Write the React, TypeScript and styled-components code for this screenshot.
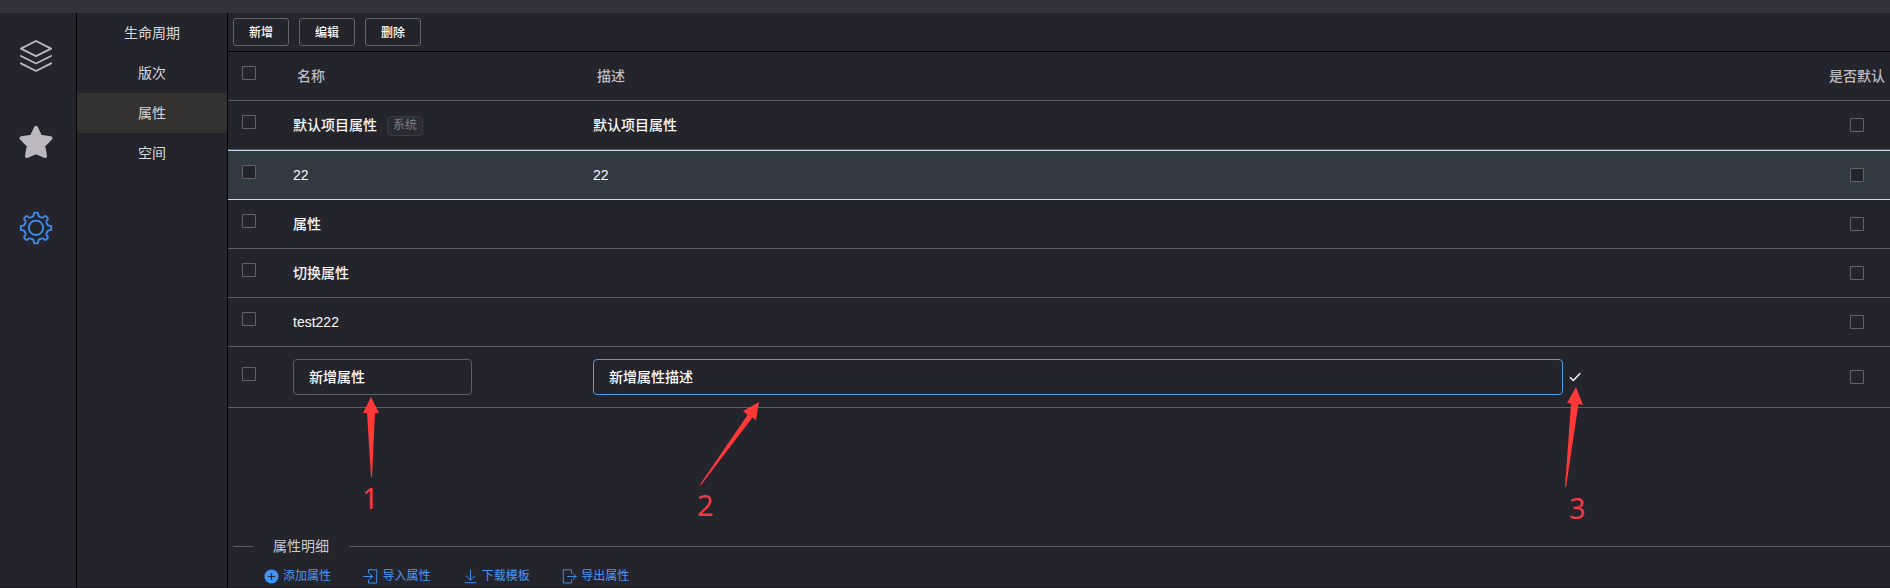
import React from "react";
import styled, { createGlobalStyle, css } from "styled-components";

const Global = createGlobalStyle`
  *, *::before, *::after { box-sizing: border-box; }
  body {
    margin: 0;
    background: #24242d;
    color: #f4f4f6;
    font: 14px/20px "Liberation Sans", "Noto Sans CJK SC", sans-serif;
    overflow: hidden;
  }
  button, input { font-family: inherit; }
`;

const Page = styled.div`
  position: relative;
  display: flex;
  flex-direction: column;
  width: 1890px;
  height: 588px;
  overflow: hidden;
  border-bottom: 1px solid #1b1b23;
`;

const TopBar = styled.header`
  flex: none;
  height: 13px;
  background: #32323d;
`;

const Body = styled.div`
  display: flex;
  flex: 1;
  min-height: 0;
`;

const IconRail = styled.nav`
  display: flex;
  flex-direction: column;
  align-items: center;
  flex: none;
  width: 77px;
  padding: 26px 4px 0 0;
  gap: 52px;
  border-right: 1px solid #000;
`;

const RailIcon = styled.svg<{ $active?: boolean }>`
  display: block;
  flex: none;
  width: 34px;
  height: 34px;
  color: ${(p) => (p.$active ? "#3e8ef2" : "#bbb8be")};
`;

const SideMenu = styled.nav`
  display: flex;
  flex-direction: column;
  flex: none;
  width: 151px;
  border-right: 1px solid #000;
`;

const MenuItem = styled.a<{ $active?: boolean }>`
  display: flex;
  align-items: center;
  justify-content: center;
  height: 40px;
  color: #d9d9db;
  background: ${(p) => (p.$active ? "#343230" : "transparent")};
`;

const Main = styled.main`
  display: flex;
  flex-direction: column;
  flex: 1;
  min-width: 0;
`;

const Toolbar = styled.div`
  display: flex;
  gap: 10px;
  flex: none;
  height: 39px;
  padding: 5px;
  border-bottom: 1px solid #000;
`;

const ToolButton = styled.button`
  width: 56px;
  height: 28px;
  padding: 0 0 2px;
  border: 1px solid #65656e;
  border-radius: 3px;
  background: transparent;
  color: #fff;
  font-size: 12px;
  font-weight: 500;
`;

const Row = styled.div<{ $selected?: boolean; $head?: boolean; $tall?: boolean }>`
  display: grid;
  grid-template-columns: 65px 300px 1fr 67px;
  align-items: center;
  flex: none;
  height: ${(p) => (p.$tall ? 61 : 49)}px;
  border-bottom: 1px solid #5d5d67;
  color: ${(p) => (p.$head ? "#bdbcc2" : "#fafafa")};
  font-weight: 500;
  ${(p) =>
    p.$selected &&
    css`
      height: 50px;
      border-top: 1px solid #c5dbe5;
      border-bottom-color: #c5dbe5;
      background: #313a43;
    `}
`;

const CheckCell = styled.div`
  padding: 0 0 6px 14px;
`;

const Cell = styled.div<{ $indent?: boolean }>`
  display: flex;
  align-items: center;
  padding-left: ${(p) => (p.$indent ? 4 : 0)}px;
`;

const DefaultCell = styled.div`
  display: flex;
  padding-left: 27px;
`;

const DefaultHead = styled.div`
  padding-left: 6px;
  white-space: nowrap;
`;

const Checkbox = styled.span`
  display: block;
  width: 14px;
  height: 14px;
  border: 1px solid #62626b;
  border-radius: 1px;
  background: #24242d;
`;

const Tag = styled.span`
  height: 20px;
  margin: 2px 0 0 10px;
  padding: 0 5px;
  border: 1px solid #3a3a43;
  border-radius: 4px;
  background: #2b2b34;
  color: #7f7f87;
  font-size: 12px;
  font-weight: 400;
  line-height: 17px;
`;

const TextField = styled.input<{ $width: number; $focused?: boolean }>`
  width: ${(p) => p.$width}px;
  height: 36px;
  padding: 0 15px 2px;
  border: 1px solid ${(p) => (p.$focused ? "#4a9fe8" : "#5f5f69")};
  border-radius: 4px;
  outline: none;
  background: transparent;
  color: #fff;
  font-size: 14px;
  font-weight: 500;
`;

const ConfirmIcon = styled.svg`
  width: 14px;
  height: 14px;
  margin-left: 5px;
`;

const Details = styled.section`
  margin-top: auto;
  height: 53px;
`;

const DividerTitle = styled.div`
  display: flex;
  align-items: center;
  height: 24px;
  padding-left: 5px;
  gap: 20px;
  color: #cbcbcf;

  &::before, &::after {
    content: "";
    height: 1px;
    width: 20px;
    background: #5b5b64;
  }
  &::after { flex: 1; }
`;

const Actions = styled.div`
  display: flex;
  padding: 9px 0 0 36px;
`;

const Action = styled.a`
  display: flex;
  width: 99.4px;
  gap: 4px;
  color: #4b98f5;
  font-size: 12px;
  line-height: 18px;

  svg { width: 15px; height: 15px; margin-top: 2px; flex: none; }
`;

const Annotations = styled.svg`
  position: absolute;
  inset: 0;
  width: 1890px;
  height: 588px;
  pointer-events: none;
  fill: #ff3838;
`;

const Mark = styled.text`
  font: 29px "Noto Sans", sans-serif;
  fill: #f03c45;
`;

const strokeProps = { fill: "none", stroke: "currentColor", strokeLinecap: "round", strokeLinejoin: "round" } as const;

const gearPath = (() => {
  const pts: string[] = [];
  for (let i = 0; i < 8; i++) {
    const at = (deg: number, r: number) => {
      const a = ((i * 45 + deg - 90) * Math.PI) / 180;
      return `${(17 + r * Math.cos(a)).toFixed(2)} ${(17 + r * Math.sin(a)).toFixed(2)}`;
    };
    pts.push(
      `${i ? "L" : "M"}${at(-11.5, 12.4)} L${at(-9.5, 14)} Q${at(-8.5, 15.4)} ${at(-5, 15.4)} L${at(5, 15.4)} Q${at(8.5, 15.4)} ${at(9.5, 14)} L${at(11.5, 12.4)} Q${at(22.5, 11)} ${at(33.5, 12.4)}`
    );
  }
  return pts.join(" ") + "Z";
})();

const rows = [
  { name: "默认项目属性", desc: "默认项目属性", system: true },
  { name: "22", desc: "22", selected: true },
  { name: "属性" },
  { name: "切换属性" },
  { name: "test222" },
];

export default function App() {
  return (
    <>
      <Global />
      <Page>
        <TopBar />
        <Body>
          <IconRail>
            <RailIcon viewBox="0 0 34 34">
              <g {...strokeProps} strokeWidth="1.9">
                <path d="M17 2 32.1 9.7 17 17.2 1.9 9.7Z" />
                <path d="M1.9 17 17 24.5 32.1 17M1.9 24.3 17 32 32.1 24.3" />
              </g>
            </RailIcon>
            <RailIcon viewBox="0 0 34 34">
              <path
                d="M17 2.8 21.3 11.8 31.5 13.2 24.2 20.6 26 31 17 27.2 8 31 9.8 20.6 2.5 13.2 12.7 11.8Z"
                fill="currentColor"
                stroke="currentColor"
                strokeWidth="4"
                strokeLinejoin="round"
              />
            </RailIcon>
            <RailIcon viewBox="0 0 34 34" $active>
              <g {...strokeProps} strokeWidth="1.8">
                <path d={gearPath} />
                <circle cx="17" cy="16.8" r="7.2" />
              </g>
            </RailIcon>
          </IconRail>
          <SideMenu>
            <MenuItem>生命周期</MenuItem>
            <MenuItem>版次</MenuItem>
            <MenuItem $active>属性</MenuItem>
            <MenuItem>空间</MenuItem>
          </SideMenu>
          <Main>
            <Toolbar>
              <ToolButton>新增</ToolButton>
              <ToolButton>编辑</ToolButton>
              <ToolButton>删除</ToolButton>
            </Toolbar>
            <Row $head>
              <CheckCell><Checkbox /></CheckCell>
              <Cell $indent>名称</Cell>
              <Cell $indent>描述</Cell>
              <DefaultHead>是否默认</DefaultHead>
            </Row>
            {rows.map((r) => (
              <Row key={r.name} $selected={r.selected}>
                <CheckCell><Checkbox /></CheckCell>
                <Cell>{r.name}{r.system && <Tag>系统</Tag>}</Cell>
                <Cell>{r.desc}</Cell>
                <DefaultCell><Checkbox /></DefaultCell>
              </Row>
            ))}
            <Row $tall>
              <CheckCell><Checkbox /></CheckCell>
              <Cell><TextField $width={179} defaultValue="新增属性" /></Cell>
              <Cell>
                <TextField $width={970} $focused defaultValue="新增属性描述" />
                <ConfirmIcon viewBox="0 0 14 14">
                  <path d="M2 7.2 5.3 10.6 12.3 3.3" fill="none" stroke="#fff" strokeWidth="1.4" />
                </ConfirmIcon>
              </Cell>
              <DefaultCell><Checkbox /></DefaultCell>
            </Row>
            <Details>
              <DividerTitle>属性明细</DividerTitle>
              <Actions>
                <Action>
                  <svg viewBox="0 0 15 15">
                    <circle cx="7.5" cy="7.5" r="7" fill="#3f94fa" />
                    <path d="M4 7.5H11M7.5 4V11" stroke="#24242d" strokeWidth="1.2" />
                  </svg>
                  添加属性
                </Action>
                <Action>
                  <svg viewBox="0 0 15 15">
                    <path d="M5.5 3.5V.8H13.7V14H5.5V11M.5 7.5H9.5M6.7 4.7 9.5 7.5 6.7 10.3" {...strokeProps} strokeWidth=".9" />
                  </svg>
                  导入属性
                </Action>
                <Action>
                  <svg viewBox="0 0 15 15">
                    <path d="M7.500 1V11M3.300 7 7.500 11.200 11.700 7M2 13.700H13" {...strokeProps} strokeWidth=".9" />
                  </svg>
                  下载模板
                </Action>
                <Action>
                  <svg viewBox="0 0 15 15">
                    <path d="M9.5 4V.8H1.3V14H9.5V11M5.5 7.5H14M11.2 4.7 14 7.5 11.2 10.3" {...strokeProps} strokeWidth=".9" />
                  </svg>
                  导出属性
                </Action>
              </Actions>
            </Details>
          </Main>
        </Body>
        <Annotations viewBox="0 0 1890 588">
          <path d="M371 397 379 413H375L372 477H371L367 413H363Z" />
          <path d="M759 402 756 420.5 752.5 417.5 701 485 700 484.5 747.5 415 743 411Z" />
          <path d="M1576 387 1583 405 1578.5 404 1566 487H1565L1571 403.5 1567 403Z" />
          <Mark x="362" y="509">1</Mark>
          <Mark x="697" y="516">2</Mark>
          <Mark x="1569" y="519">3</Mark>
        </Annotations>
      </Page>
    </>
  );
}
